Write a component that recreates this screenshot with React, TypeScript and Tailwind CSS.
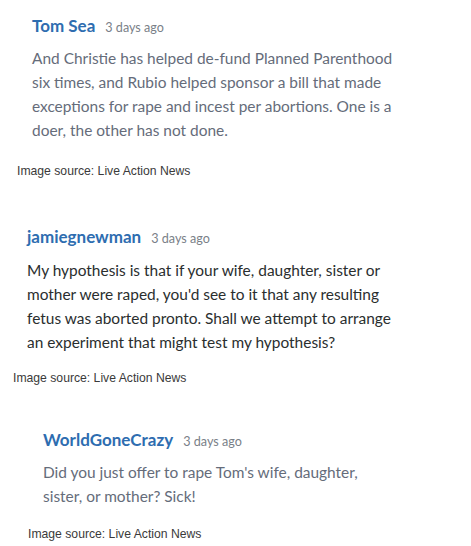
import React from "react";

function Caption({ className }: { className: string }) {
  return (
    <div
      className={`${className} text-[12.2px] leading-[16px] text-[#3a3a3a]`}
      style={{ fontFamily: '"Liberation Sans", Arial, sans-serif' }}
    >
      Image source: Live Action News
    </div>
  );
}

function Header({ name }: { name: string }) {
  return (
    <div className="flex items-baseline h-[24px] leading-[24px]">
      <span className="text-[17px] font-bold text-[#2e6db0]">{name}</span>
      <span className="ml-[10px] text-[12.6px] text-[#7a7f88]">3 days ago</span>
    </div>
  );
}

function Body({ lines, color, mt }: { lines: string[]; color: string; mt: string }) {
  return (
    <div className={`${mt} text-[15.45px] leading-[24px] ${color}`}>
      {lines.map((l) => (
        <div key={l} className="whitespace-nowrap">
          {l}
        </div>
      ))}
    </div>
  );
}

export default function App() {
  const font = { fontFamily: 'Lato, "Noto Sans", sans-serif' };
  return (
    <div className="w-[471px] h-[546px] bg-white overflow-hidden" style={font}>
      {/* Comment 1 */}
      <div className="pt-[14px] pl-[32px]">
        <Header name="Tom Sea" />
        <Body
          mt="mt-[8px]"
          color="text-[#656c7a]"
          lines={[
            "And Christie has helped de-fund Planned Parenthood",
            "six times, and Rubio helped sponsor a bill that made",
            "exceptions for rape and incest per abortions. One is a",
            "doer, the other has not done.",
          ]}
        />
      </div>
      <Caption className="mt-[21px] pl-[17px]" />

      {/* Comment 2 */}
      <div className="mt-[46px] pl-[27px]">
        <Header name="jamiegnewman" />
        <Body
          mt="mt-[9px]"
          color="text-[#2a2e2e]"
          lines={[
            "My hypothesis is that if your wife, daughter, sister or",
            "mother were raped, you'd see to it that any resulting",
            "fetus was aborted pronto. Shall we attempt to arrange",
            "an experiment that might test my hypothesis?",
          ]}
        />
      </div>
      <Caption className="mt-[16px] pl-[13px]" />

      {/* Comment 3 */}
      <div className="mt-[42px] pl-[43px]">
        <Header name="WorldGoneCrazy" />
        <Body
          mt="mt-[8px]"
          color="text-[#656c7a]"
          lines={["Did you just offer to rape Tom's wife, daughter,", "sister, or mother? Sick!"]}
        />
      </div>
      <Caption className="mt-[18px] pl-[28px]" />
    </div>
  );
}
